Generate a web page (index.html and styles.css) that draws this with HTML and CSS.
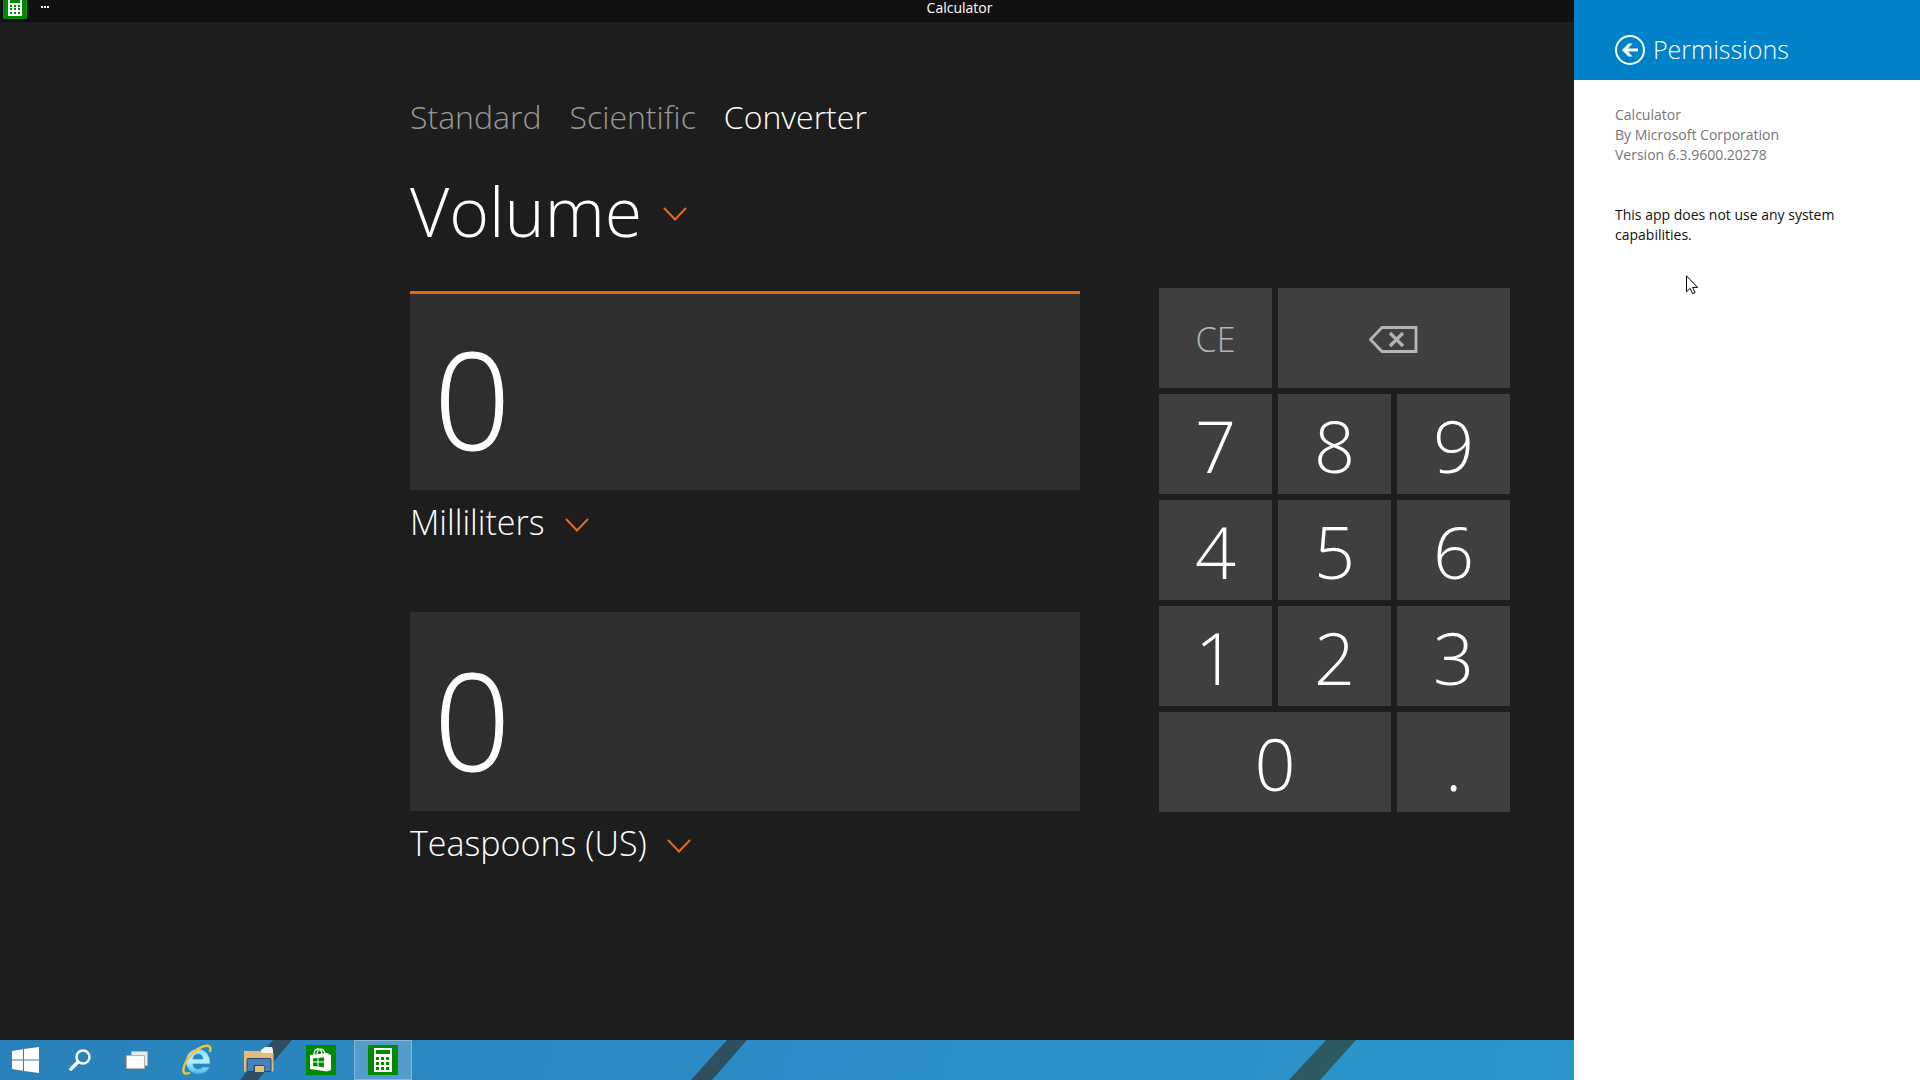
FILE: index.html
```html
<!DOCTYPE html>
<html lang="en">
  <head>
    <meta charset="UTF-8" />
    <meta name="viewport" content="width=device-width, initial-scale=1.0" />
    <title>Calculator</title>
    <link rel="stylesheet" href="styles.css">
  </head>
  <body>
    <div class="screen">
      <header class="titlebar">
        <div class="titlebar-left">
          <svg class="app-icon" width="24" height="19" viewBox="0 5 24 19">
            <rect width="24" height="24" fill="#008a00" />
            <path fill="#fff" fill-rule="evenodd" d="M5 2h14v19H5zM7 4v4h10V4zM7 10v2h2v-2zM11 10v2h2v-2zM15 10v2h2v-2zM7 13v2h2v-2zM11 13v2h2v-2zM15 13v2h2v-2zM7 17v2h2v-2zM11 17v2h2v-2zM15 17v2h2v-2z" />
          </svg>
          <button class="more" aria-label="App commands">
            <svg width="8" height="2" viewBox="0 0 8 2" fill="#fff">
              <path d="M0 0h2v2H0zM3 0h2v2H3zM6 0h2v2H6z" />
            </svg>
          </button>
        </div>
        <span class="app-name">Calculator</span>
      </header>

      <main class="app">
        <nav class="tabs">
          <button class="tab">Standard</button>
          <button class="tab">Scientific</button>
          <button class="tab active">Converter</button>
        </nav>

        <div class="picker category">
          <select id="category" aria-label="Category">
            <option>Volume</option>
          </select>
          <svg class="chevron" width="24" height="14" viewBox="0 0 24 14"><path d="M1 1l11 11.500L23 1" /></svg>
        </div>

        <div class="converter">
          <div class="fields">
            <input class="display active" type="text" value="0" aria-label="From value" />
            <div class="picker">
              <select aria-label="From unit">
                <option>Milliliters</option>
              </select>
              <svg class="chevron" width="24" height="14" viewBox="0 0 24 14"><path d="M1 1l11 11.500L23 1" /></svg>
            </div>
            <input class="display" type="text" value="0" aria-label="To value" />
            <div class="picker">
              <select aria-label="To unit">
                <option>Teaspoons (US)</option>
              </select>
              <svg class="chevron" width="24" height="14" viewBox="0 0 24 14"><path d="M1 1l11 11.500L23 1" /></svg>
            </div>
          </div>

          <div class="keypad">
            <button class="key clear">CE</button>
            <button class="key wide" aria-label="Backspace">
              <svg width="50" height="27" viewBox="0 0 50 27" fill="none" stroke="#b4b4b4">
                <path stroke-width="2.800" d="M13 1.500h34v24H13L1.500 13.500z" />
                <path stroke-width="3.200" d="M21 7l13 13M34 7L21 20" />
              </svg>
            </button>
            <button class="key">7</button>
            <button class="key">8</button>
            <button class="key">9</button>
            <button class="key">4</button>
            <button class="key">5</button>
            <button class="key">6</button>
            <button class="key">1</button>
            <button class="key">2</button>
            <button class="key">3</button>
            <button class="key wide">0</button>
            <button class="key">.</button>
          </div>
        </div>
      </main>

      <footer class="taskbar">
        <svg class="wallpaper" width="1574" height="40" viewBox="0 0 1574 40">
          <path fill="#2f4f60" d="M273 0h19l-34 40h-18zM727 0h20l-35 40h-21z" />
          <path fill="#2d5a60" d="M1326 0h30l-36 40h-31z" />
        </svg>
        <button class="task start" aria-label="Start">
          <svg width="27" height="26" viewBox="0 0 27 26" fill="#fff">
            <path d="M0 4l11-1.700V12.500H0zM12 2.100L27 0v12.500H12zM0 13.500h11v10.200L0 22zM12 13.500h15V26l-15-2.100z" />
          </svg>
        </button>
        <button class="task search" aria-label="Search">
          <svg width="22" height="22" viewBox="0 0 22 22" fill="none" stroke="#fff">
            <circle cx="14" cy="8" r="6.500" stroke-width="2.400" />
            <path stroke-width="3.500" stroke-linecap="round" d="M9 13l-7 7" />
          </svg>
        </button>
        <button class="task view" aria-label="Task view">
          <svg width="22" height="18" viewBox="0 0 22 18" stroke="#b9b0ae">
            <path fill="#e9e9ec" d="M5.500 .5h16v14h-16z" />
            <path fill="#fff" d="M.5 4.500h18v13H.5z" />
          </svg>
        </button>
        <button class="task" aria-label="Internet Explorer">
          <svg width="30" height="32" viewBox="0 0 30 32" fill="none">
            <defs>
              <linearGradient id="ie-blue" x1="0" y1="0" x2="0" y2="1">
                <stop offset="0" stop-color="#8fdcf8" />
                <stop offset=".5" stop-color="#b4f0fd" />
                <stop offset="1" stop-color="#45b9ea" />
              </linearGradient>
            </defs>
            <path fill="url(#ie-blue)" stroke="#2a8fcc" stroke-width=".6" fill-rule="evenodd" d="M28 20c.8-8-4-15-12-15S4 11 4 17.500 9 30 16 30c5.500 0 9.500-2.500 11.500-7h-7c-1 1.500-2.500 2-4.500 2-3 0-5-2-5-5zM11 15c.3-3 2.200-5 5-5s4.800 2 5 5z" />
            <path stroke="#f5c72c" stroke-width="2.400" stroke-linecap="round" d="M28 7c1.500-4-1-6-5-5C14 4 3 15 1.500 25c-.7 4 1.500 5.500 5.500 4" />
          </svg>
        </button>
        <button class="task" aria-label="File Explorer">
          <svg width="30" height="26" viewBox="0 0 30 26">
            <path fill="#f6f2e6" d="M17 3l4-3h7l1 3v5H16z" />
            <path fill="#e3bd78" d="M0 4h16l2 2h11.500v18.500H27V11H3v13.500H0z" />
            <path fill="#4581bb" stroke="#24496f" d="M3 24.500V13c0-1 .5-1.500 1.500-1.500h21c1 0 1.500.5 1.500 1.500v11.500h-7v-6H10v6z" />
            <path fill="#e3bd78" d="M11 19h9v6h-9z" />
          </svg>
        </button>
        <button class="task" aria-label="Store">
          <svg width="30" height="30" viewBox="0 0 30 30">
            <rect width="30" height="30" fill="#008a00" />
            <path fill="none" stroke="#fff" stroke-width="1.300" d="M8 10c0-8 8-8 8 0M11 9c1-7 7-6 8 0" />
            <path fill="#fff" d="M4 10l17-2 4 2v15l-4 1.500L4 24z" />
            <path fill="#008a00" d="M7 13.500l4.500-.5v3.500H7zM12.500 13l5.500-.7v4.200h-5.500zM7 17.500h4.500v4L7 21zM12.500 17.500H18v4.700l-5.500-.6z" />
          </svg>
        </button>
        <button class="task running" aria-label="Calculator">
          <svg width="30" height="30" viewBox="0 0 30 30">
            <rect width="30" height="30" fill="#008a00" />
            <path fill="#fff" fill-rule="evenodd" d="M6 3h18v24H6zM8 5v4h14V5zM8 12v3h3v-3zM13 12v3h3v-3zM18 12v3h3v-3zM8 17v3h3v-3zM13 17v3h3v-3zM18 17v3h3v-3zM8 22v3h3v-3zM13 22v3h3v-3zM18 22v3h3v-3z" />
          </svg>
        </button>
      </footer>
    </div>

    <aside class="panel">
      <header class="panel-header">
        <button class="back" aria-label="Back">
          <svg width="30" height="30" viewBox="0 0 30 30" fill="none" stroke="#fff">
            <circle cx="15" cy="15" r="14" stroke-width="2" />
            <path stroke-width="3" d="M9 15h14" />
            <path fill="#fff" stroke="none" d="M7 15l6.500-6.500h4L11.500 15l6 6.500h-4z" />
          </svg>
        </button>
        <h1>Permissions</h1>
      </header>
      <div class="panel-body">
        <p class="about">Calculator<br />By Microsoft Corporation<br />Version 6.3.9600.20278</p>
        <p>This app does not use any system capabilities.</p>
      </div>
      <svg class="cursor" width="13" height="20" viewBox="0 0 13 20">
        <path fill="#fff" stroke="#000" d="M.5 .8v16l3.700-3.500 2.500 5.400 2.400-1.100-2.500-5.200h5z" />
      </svg>
    </aside>
  </body>
</html>
```
FILE: styles.css
```css
* {
  box-sizing: border-box;
}

body {
  margin: 0;
  display: flex;
  min-height: 100vh;
  background: #1d1d1d;
  color: #fff;
  font-family: "Open Sans", "Noto Sans", sans-serif;
  font-size: 14px;
  line-height: 20px;
}

button,
select,
input {
  margin: 0;
  padding: 0;
  border: none;
  border-radius: 0;
  outline: none;
  background: none;
  color: inherit;
  font: inherit;
}

svg {
  display: block;
}

.screen {
  flex: 1;
  min-width: 0;
  display: flex;
  flex-direction: column;
}

/* title bar */
.titlebar {
  display: grid;
  grid-template-columns: 1fr auto 1fr;
  height: 22px;
  padding-left: 3px;
  background: #111;
}

/* title is centered on the whole screen, not on the app */
.app-name {
  line-height: 16px;
  margin-left: 342px;
}

.titlebar-left {
  display: flex;
  align-items: flex-start;
  gap: 14px;
}

.more {
  padding-top: 6px;
}

/* converter */
.app {
  flex: 1;
  padding: 71px 64px 0 410px;
  font-size: 34px;
  font-weight: 300;
  line-height: 48px;
}

.tabs {
  display: flex;
  gap: 28px;
  font-size: 32px;
}

.tab {
  color: #999;
}

.tab.active {
  color: #fff;
}

.picker {
  display: flex;
  align-items: center;
  gap: 20px;
}

.picker select {
  appearance: none;
  height: 48px;
}

.category {
  margin: 22px 0 29px;
  font-size: 68px;
  line-height: 96px;
}

.category select {
  height: 96px;
}

.chevron {
  margin-top: 6px;
  fill: none;
  stroke: #e8691b;
  stroke-width: 2;
  pointer-events: none;
}

.converter {
  display: flex;
  gap: 79px;
}

.fields {
  flex: 1;
  min-width: 0;
  padding-top: 3px;
}

.display {
  display: block;
  width: 100%;
  height: 199px;
  padding: 12px 24px 0;
  border-top: 3px solid transparent;
  background: #2e2e2e;
  font-size: 134px;
  -webkit-text-stroke: 1px #fff;
}

.display.active {
  border-color: #e8691b;
}

.fields .picker {
  margin-top: 8px;
}

.fields .picker + .display {
  margin-top: 66px;
}

.keypad {
  display: grid;
  grid-template-columns: repeat(3, 1fr);
  grid-auto-rows: 100px;
  gap: 6px;
  width: 351px;
}

.key {
  display: flex;
  align-items: center;
  justify-content: center;
  padding-top: 2px;
  background: #3f3f3f;
  font-size: 72px;
}

.key.clear {
  color: #b4b4b4;
  font-size: 34px;
}

.key.wide {
  grid-column: span 2;
}

/* taskbar */
.taskbar {
  position: relative;
  display: flex;
  height: 40px;
  overflow: hidden;
  background: linear-gradient(100deg, #2a82ba, #2a8cc6 50%, #2b96cb);
}

.wallpaper {
  position: absolute;
  top: 0;
  left: 0;
}

.task {
  position: relative;
  display: flex;
  align-items: center;
  justify-content: center;
  width: 62px;
}

.task.start {
  width: 50px;
}

.task.search {
  width: 60px;
}

.task.view {
  width: 54px;
  margin-right: 2px;
}

.task.running {
  width: 58px;
  margin: 0 2px;
  border: 1px solid #86b9dc;
  background: #539ccc;
}

/* permissions panel */
.panel {
  position: relative;
  width: 346px;
  background: #fff;
  color: #111;
}

.panel-header {
  display: flex;
  align-items: center;
  gap: 8px;
  height: 80px;
  padding: 20px 41px 0;
  background: #0082ca;
  color: #fff;
}

.panel-header h1 {
  margin: 0;
  padding-bottom: 2px;
  font-size: 25px;
  font-weight: 300;
  line-height: 30px;
}

.panel-body {
  padding: 25px 41px;
}

.panel-body p {
  margin: 0 0 40px;
}

.panel-body .about {
  color: #767676;
}

.cursor {
  position: absolute;
  top: 275px;
  left: 112px;
}
```
